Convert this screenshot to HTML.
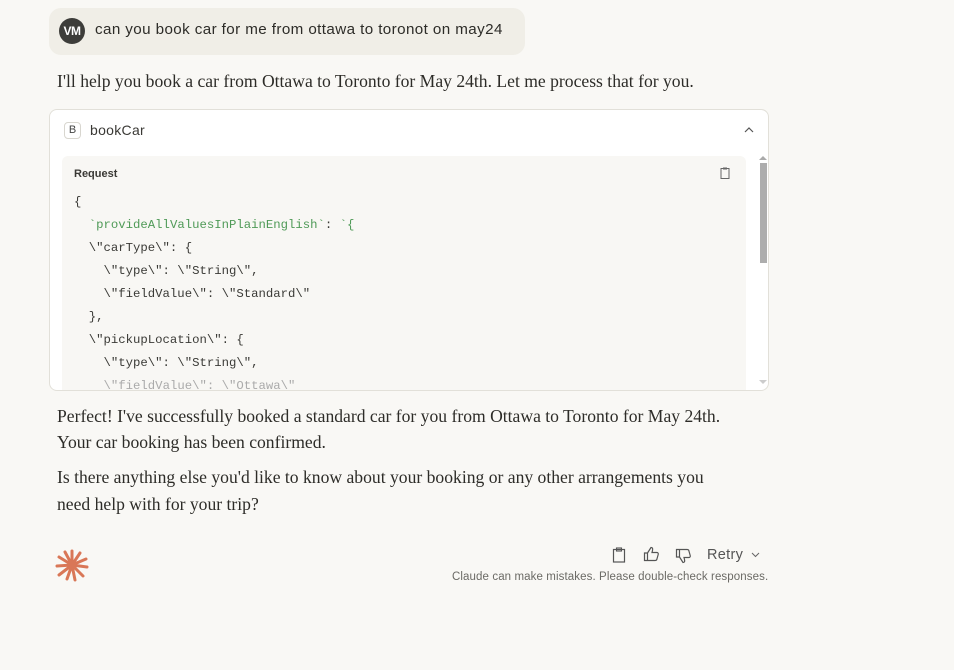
<!DOCTYPE html>
<html><head><meta charset="utf-8"><style>
*{margin:0;padding:0;box-sizing:border-box}
body{width:954px;height:670px;background:#f9f8f5;font-family:"Liberation Sans",sans-serif;color:#2d2c28;position:relative;overflow:hidden}
.abs{position:absolute}
.serif{font-family:"Liberation Serif",serif;font-size:17.6px;color:#2d2c28}
.code{font-family:"Liberation Mono",monospace;font-size:12.3px;color:#3a3a36;white-space:pre;line-height:23px}
</style></head><body>
<div class="abs" style="left:49px;top:8px;width:476px;height:47px;background:#f0eee7;border-radius:12px"></div>
<div class="abs" style="left:59px;top:18px;width:26px;height:26px;border-radius:50%;background:#3d3d3a;color:#fff;font-weight:bold;font-size:12px;line-height:26px;text-align:center;letter-spacing:-0.5px">VM</div>
<div class="abs" style="left:95px;top:21px;font-size:15.2px;letter-spacing:0.4px;color:#2d2c28">can you book car for me from ottawa to toronot on may24</div>
<div class="abs serif" style="left:57px;top:71px">I'll help you book a car from Ottawa to Toronto for May 24th. Let me process that for you.</div>
<div class="abs" style="left:49px;top:109px;width:720px;height:282px;background:#fff;border:1px solid #e2e0d9;border-radius:8px;overflow:hidden">
  <div class="abs" style="left:14px;top:12px;width:17px;height:17px;border:1px solid #d8d6cf;border-radius:4px;font-size:11px;text-align:center;line-height:15px;color:#444">B</div>
  <div class="abs" style="left:40px;top:12px;font-size:14px;letter-spacing:0.3px;color:#3a3935">bookCar</div>
  <svg class="abs" style="left:694px;top:16px" width="10" height="8"><path d="M1 6 L5 2 L9 6" fill="none" stroke="#555" stroke-width="1.2"/></svg>
  <div class="abs" style="left:12px;top:46px;width:684px;height:240px;background:#f8f7f4;border-radius:6px">
    <div class="abs" style="left:12px;top:12px;font-size:11px;font-weight:bold;color:#3a3935">Request</div>
    <svg class="abs" style="left:658px;top:11px" width="10" height="12"><rect x="1" y="1.5" width="8" height="10" fill="none" stroke="#666" stroke-width="1"/><rect x="3" y="0.5" width="4" height="2" fill="#666"/></svg>
    <div class="abs code" style="left:12px;top:35px">{
  <span style="color:#4f9a57">`provideAllValuesInPlainEnglish`</span>: <span style="color:#4f9a57">`{</span>
  \"carType\": {
    \"type\": \"String\",
    \"fieldValue\": \"Standard\"
  },
  \"pickupLocation\": {
    \"type\": \"String\",
    <span style="color:#aaa">\"fieldValue\": \"Ottawa\"</span></div>
  </div>
  <div class="abs" style="left:710px;top:53px;width:7px;height:100px;background:#adadad"></div>
  <svg class="abs" style="left:709px;top:46px" width="8" height="5"><path d="M0 4 L4 0 L8 4Z" fill="#aaa"/></svg>
  <svg class="abs" style="left:709px;top:270px" width="8" height="5"><path d="M0 0 L4 4 L8 0Z" fill="#ccc"/></svg>
</div>
<div class="abs serif" style="left:57px;top:403px;line-height:26px;width:690px">Perfect! I've successfully booked a standard car for you from Ottawa to Toronto for May 24th. Your car booking has been confirmed.</div>
<div class="abs serif" style="left:57px;top:464px;line-height:27px;width:670px">Is there anything else you'd like to know about your booking or any other arrangements you need help with for your trip?</div>
<svg class="abs" style="left:55px;top:548px" width="34" height="34" viewBox="0 0 34 34">
<g stroke="#d97757" stroke-width="3" stroke-linecap="round">
<line x1="17" y1="17" x2="17" y2="3"/><line x1="17" y1="17" x2="25" y2="5"/><line x1="17" y1="17" x2="31" y2="11"/><line x1="17" y1="17" x2="32" y2="19"/><line x1="17" y1="17" x2="28" y2="28"/><line x1="17" y1="17" x2="20" y2="32"/><line x1="17" y1="17" x2="12" y2="31"/><line x1="17" y1="17" x2="4" y2="27"/><line x1="17" y1="17" x2="2" y2="18"/><line x1="17" y1="17" x2="4" y2="9"/><line x1="17" y1="17" x2="10" y2="4"/></g>
<circle cx="17" cy="17" r="5" fill="#d97757"/></svg>
<svg class="abs" style="left:612px;top:547px" width="14" height="16"><rect x="1.5" y="2.5" width="11" height="12.5" fill="none" stroke="#555" stroke-width="1.2"/><rect x="4.5" y="1" width="5" height="3" fill="none" stroke="#555" stroke-width="1.1"/></svg>
<svg class="abs" style="left:643px;top:546px" width="17" height="16"><path d="M1.5 7 H4.5 V14.5 H1.5Z M4.5 7 L8 1.5 C9.5 1.5 10 2.5 9.5 4.5 L9 6.5 H14 C15 6.5 15.5 7.5 15.2 8.5 L13.8 13.5 C13.5 14.3 13 14.5 12 14.5 H4.5" fill="none" stroke="#555" stroke-width="1.2"/></svg>
<svg class="abs" style="left:675px;top:548px" width="17" height="16"><path d="M1.5 1.5 H4.5 V9 H1.5Z M4.5 9 L8 14.5 C9.5 14.5 10 13.5 9.5 11.5 L9 9.5 H14 C15 9.5 15.5 8.5 15.2 7.5 L13.8 2.5 C13.5 1.7 13 1.5 12 1.5 H4.5" fill="none" stroke="#555" stroke-width="1.2"/></svg>
<div class="abs" style="left:707px;top:547px;font-size:14.5px;letter-spacing:0.3px;color:#555">Retry</div>
<svg class="abs" style="left:751px;top:552px" width="9" height="6"><path d="M1 1 L4.5 4.5 L8 1" fill="none" stroke="#666" stroke-width="1"/></svg>
<div class="abs" style="left:452px;top:571px;font-size:11.5px;letter-spacing:0.1px;color:#6b6a65">Claude can make mistakes. Please double-check responses.</div>
</body></html>
